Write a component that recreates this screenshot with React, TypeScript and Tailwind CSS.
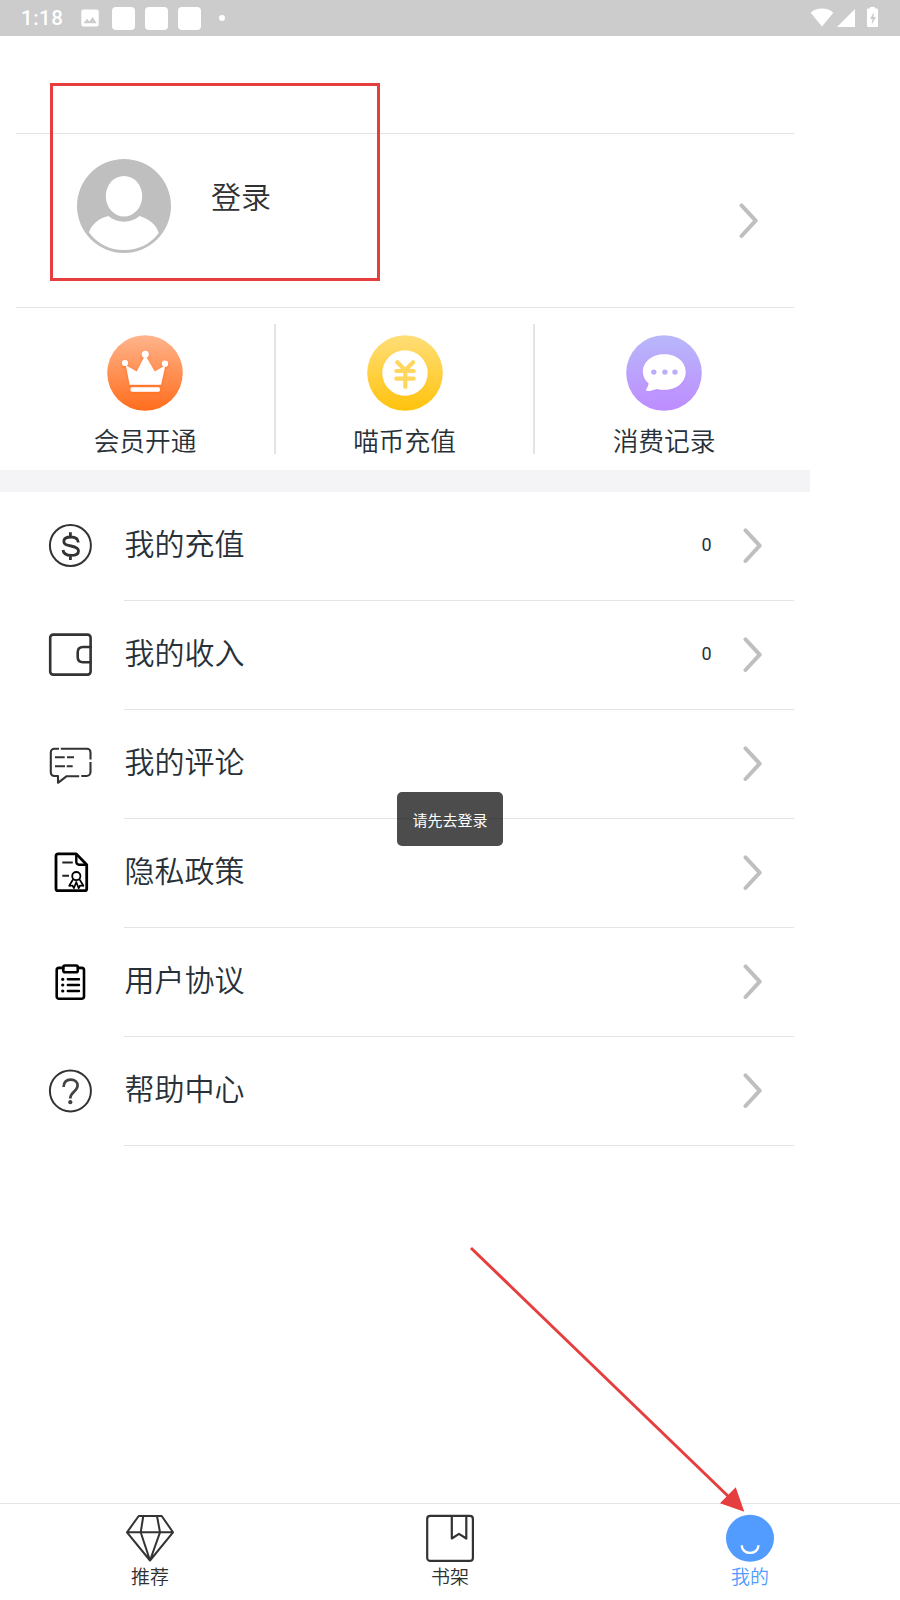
import type { ReactNode } from 'react';

const Chevron = () => (
  <svg className="block h-[36px] w-[20px]" viewBox="0 0 20 36" fill="none" stroke="#bfbfbf" strokeWidth="4" strokeLinecap="round" strokeLinejoin="round">
    <path d="M2.500 2.400 16.700 17.700 2.500 33" />
  </svg>
);

const Icon = ({ children, color = '#333', width = 2 }: { children: ReactNode; color?: string; width?: number }) => (
  <svg className="block size-[48px] shrink-0" viewBox="0 0 48 48" fill="none" stroke={color} strokeWidth={width} strokeLinecap="round" strokeLinejoin="round">
    {children}
  </svg>
);

const DollarIcon = () => (
  <Icon>
    <circle cx="24.4" cy="23.5" r="20.5" />
    <path strokeWidth="2.800" strokeLinecap="butt" d="M32.300 20.500C32 17 29.300 15 25 15c-4.500 0-7.200 1.600-7.200 4.400C17.800 22.500 20.500 23.200 25 24c4.600.9 7.500 2 7.500 4.900 0 3-3 4.500-7.500 4.500-4.800 0-7.600-1.700-8-5.400M24.400 10.200V15M24.400 33.400V38" />
  </Icon>
);
const WalletIcon = () => (
  <Icon width={2.600}>
    <rect x="4.200" y="3.600" width="40.400" height="40" rx="3" />
    <path d="M44.600 16H37c-3.500 0-5.300 2-5.300 5.200v4.900c0 3.200 1.800 5.200 5.300 5.200h7.600" />
  </Icon>
);
const CommentIcon = () => (
  <Icon width={2.100}>
    <path strokeLinecap="butt" d="M13 8.700H8.500a3.700 3.700 0 0 0-3.700 3.700v20.100A3.500 3.500 0 0 0 8.300 36H12v6.800l8.700-6.600h12.500M14.800 8.700H41a3.500 3.500 0 0 1 3.500 3.500v7.300M44.500 22V32a4 4 0 0 1-4 4h-5.200M9 17.300h9.700M21 17.300h7M9 26.300h10M20.700 26.300h6" />
  </Icon>
);
const PolicyIcon = () => (
  <Icon color="#000" width={2.800}>
    <path d="M12 4.900h18.300L40.700 15.700v24a2 2 0 0 1-2 2H12a2 2 0 0 1-2-2V6.900a2 2 0 0 1 2-2Z" />
    <path strokeWidth="2.400" d="M30.300 5.500V13a2.700 2.700 0 0 0 2.700 2.700h7" />
    <path stroke="#222" strokeWidth="2" strokeLinecap="butt" d="M16.300 13.500h10.500M16.300 26.700h6.700" />
    <circle strokeWidth="1.800" cx="30.300" cy="27.100" r="4.100" />
    <path strokeWidth="1.700" d="m26.700 31-3.500 5.800 3.300-.3 1.400 2.700 2.400-6.200 2.400 6.200 1.400-2.700 3.300.3L33.900 31" />
  </Icon>
);
const AgreementIcon = () => (
  <Icon color="#000" width={2.600}>
    <path d="M17.300 9.900H13a2.300 2.300 0 0 0-2.300 2.300v26.200a2.300 2.300 0 0 0 2.300 2.300h22.700a2.300 2.300 0 0 0 2.300-2.300V12.200a2.300 2.300 0 0 0-2.300-2.300H32" />
    <rect x="17.300" y="7.500" width="14.500" height="6.700" rx="1.800" />
    <path d="M21.800 21.300h11.200M21.800 27h11.200M21.800 33h11.200" strokeWidth="2.400" />
    <path d="M16.700 21.300h.1M16.700 27h.1M16.700 33h.1" strokeWidth="3.200" />
  </Icon>
);
const HelpIcon = () => (
  <Icon>
    <circle cx="24.400" cy="23.900" r="20.500" />
    <path stroke="#444" strokeWidth="2.700" strokeLinecap="butt" d="M17.600 20c0-4.700 2.800-7.400 7-7.400 4.300 0 7 2.300 7 6 0 5.700-7.300 6.400-7.300 13" />
    <circle cx="24.300" cy="35.200" r="2.100" fill="#444" stroke="none" />
  </Icon>
);

const Disc = ({ id, from, to, children }: { id: string; from: string; to: string; children: ReactNode }) => (
  <svg className="block size-[76px] shrink-0" viewBox="0 0 76 76">
    <defs>
      <linearGradient id={id} x1="0" y1="0" x2="0" y2="1">
        <stop offset="0" stopColor={from} />
        <stop offset="1" stopColor={to} />
      </linearGradient>
      <filter id={id + '-shadow'} x="-20%" y="-20%" width="140%" height="150%">
        <feDropShadow dx="0" dy="1.500" stdDeviation="1.500" floodColor={to} floodOpacity="0.800" />
      </filter>
    </defs>
    <circle cx="38" cy="38" r="37.800" fill={`url(#${id})`} />
    <g filter={`url(#${id}-shadow)`}>{children}</g>
  </svg>
);

const shortcuts = [
  {
    label: '会员开通',
    icon: (
      <Disc id="vip" from="#ffb48c" to="#ff6d1c">
        <g fill="#fff">
          <circle cx="18" cy="28" r="3.100" />
          <circle cx="38.300" cy="19.200" r="3.500" />
          <circle cx="58" cy="28.700" r="3.100" />
          <path d="m19 30.500 10.700 6 7.300-14h2.600l8.100 14 10.600-6L54 49.700H22.700Z" />
          <rect x="23.500" y="52.200" width="29.500" height="4.600" rx="1.800" />
        </g>
      </Disc>
    ),
  },
  {
    label: '喵币充值',
    icon: (
      <Disc id="coin" from="#ffde78" to="#ffc30d">
        <circle cx="38" cy="38" r="22.700" fill="#fff" />
        <path d="m30.300 27.300 7.900 7.900 7.900-7.900M29.300 36h17.400M29.300 43.700h17.400M38.300 36v16" fill="none" stroke="#ffd75f" strokeWidth="4.200" strokeLinecap="round" strokeLinejoin="round" />
      </Disc>
    ),
  },
  {
    label: '消费记录',
    icon: (
      <Disc id="history" from="#b8b8fa" to="#be8cff">
        <path fill="#fff" d="M38.300 19.200c12.300 0 21.400 7.600 21.400 17.700s-9 17.900-21.400 17.900c-2.700 0-4.800-.3-7-.9-3.200.4-6.500 2.300-10.500 2.200-1-.3-.7-1.400-.2-2.300 1-2 2-3.700 2-5.500-3.500-3-5.700-6.800-5.700-11.400 0-10.100 9-17.700 21.400-17.700Z" />
        <g fill="#bbadfb">
          <circle cx="27.800" cy="37.100" r="2.700" />
          <circle cx="38.900" cy="37.100" r="2.700" />
          <circle cx="49" cy="37.100" r="2.700" />
        </g>
      </Disc>
    ),
  },
];

const rows: { label: string; icon: ReactNode; value?: string }[] = [
  { label: '我的充值', icon: <DollarIcon />, value: '0' },
  { label: '我的收入', icon: <WalletIcon />, value: '0' },
  { label: '我的评论', icon: <CommentIcon /> },
  { label: '隐私政策', icon: <PolicyIcon /> },
  { label: '用户协议', icon: <AgreementIcon /> },
  { label: '帮助中心', icon: <HelpIcon /> },
];

const StatusBar = () => (
  <header className="flex h-[36px] shrink-0 items-center bg-[#ccc] pl-[21px] pr-[22px] text-white">
    <span className="w-[60px] pt-px text-[20.5px] font-medium leading-none tracking-[0.5px]">1:18</span>
    <svg className="size-[18px]" viewBox="0 0 18 18">
      <rect x=".3" y=".5" width="17.400" height="17" rx="2" fill="#fff" />
      <path d="m2.500 14.300 3.500-4.600 2.300 2.800 3.400-4.500 4 6.300Z" fill="#ccc" />
    </svg>
    <div className="ml-[13px] flex gap-[10px]">
      <span className="size-[23px] rounded-[4px] bg-white" />
      <span className="size-[23px] rounded-[4px] bg-white" />
      <span className="size-[23px] rounded-[4px] bg-white" />
    </div>
    <span className="ml-[18px] size-[6px] rounded-full bg-white" />
    <svg className="mb-[2px] ml-auto h-[20px] w-[68px]" viewBox="0 0 68 20" fill="#fff">
      <path d="M.7 5.700C6.500.2 17.500.2 23.300 5.700L12 19.500Z" />
      <path d="M45 2v18H27Z" />
      <path d="M60 0h5v1.500h2a1 1 0 0 1 1 1V19a1 1 0 0 1-1 1h-9a1 1 0 0 1-1-1V2.500a1 1 0 0 1 1-1h2Z" />
      <path d="m64 5-4 7h2.500l-1 6 4.500-8h-2.500Z" fill="#ccc" />
    </svg>
  </header>
);

const tabs = [
  {
    label: '推荐',
    active: false,
    icon: (
      <Icon width={2}>
        <path d="M12.700 2h23L47 18.300 24 46.500 1 18.300ZM1 18.300h46M17.300 2l-2.600 16.300L24 46.500l10-28.200L31 2" />
      </Icon>
    ),
  },
  {
    label: '书架',
    active: false,
    icon: (
      <Icon width={2.200}>
        <rect x="1.200" y="1.900" width="45.700" height="45" rx="3" />
        <path d="M25.800 2v22.500l7.200-4.600 7.300 4.600V2" />
      </Icon>
    ),
  },
  {
    label: '我的',
    active: true,
    icon: (
      <Icon color="#fff" width={2.300}>
        <ellipse cx="24" cy="24.300" rx="24" ry="23.500" fill="#529bff" stroke="none" />
        <path strokeLinecap="butt" d="M15.800 31.200c0 10.300 16.600 10.300 16.600 0" />
      </Icon>
    ),
  },
];

export default function App() {
  return (
    <div lang="zh-CN" className="relative flex h-[1600px] w-[900px] flex-col overflow-hidden bg-white font-['Roboto','Noto_Sans_CJK_SC',sans-serif] text-[#283038]">
      <StatusBar />

      <main className="flex w-[810px] flex-1 flex-col">
        <section className="mx-[16px] mt-[97px] flex h-[175px] border-y border-[#e4e4e4] pl-[61px] pt-[25px]">
          <svg className="block size-[94px]" viewBox="0 0 94 94">
            <circle cx="47" cy="47" r="47" fill="#bfbfbf" />
            <ellipse cx="47" cy="37.200" rx="18.200" ry="20.300" fill="#fff" />
            <path d="M31.500 57c8 7.500 23 7.500 31 0 9.500 2.700 17 9 19.200 17C73.500 85 61.500 91 47 91S20.500 85 12 73.500C14 66 22 59 31.500 57Z" fill="#fff" />
          </svg>
          <h1 className="ml-[40px] mt-[24px] text-[30px] font-[350] leading-none text-[#303133]">登录</h1>
          <div className="ml-auto mr-[35px] mt-[44px]">
            <Chevron />
          </div>
        </section>

        <section className="mx-[16px] grid h-[162px] grid-cols-[260px_259px_259px] py-[16px]">
          {shortcuts.map((s, i) => (
            <div key={s.label} className={`flex h-[130px] flex-col items-center pt-[11px] ${i < 2 ? 'border-r-2 border-[#e4e4e4]' : 'pr-px'}`}>
              {s.icon}
              <span className="mt-[19px] text-[25.7px] font-[350] leading-none">{s.label}</span>
            </div>
          ))}
        </section>
        <div className="h-[22px] bg-[#f4f4f6]" />

        <ul>
          {rows.map((r) => (
            <li key={r.label} className="flex h-[109px]">
              <div className="w-[124px] pl-[46px] pt-[30px]">{r.icon}</div>
              <div className="flex w-[670px] items-center border-b border-[#e4e4e4] pl-[0.5px] pr-[31px]">
                <span className="mb-[3px] text-[30px] font-[350] leading-none">{r.label}</span>
                <span className="mb-[3px] ml-auto mr-[31.5px] text-[18px] leading-none">{r.value}</span>
                <Chevron />
              </div>
            </li>
          ))}
        </ul>
      </main>

      <nav className="flex h-[97px] shrink-0 border-t border-[#e4e4e4]">
        {tabs.map((t) => (
          <div key={t.label} className={`flex flex-1 flex-col items-center pt-[10px] text-[19px] font-[350] leading-none ${t.active ? 'text-[#529bff]' : 'text-[#303030]'}`}>
            {t.icon}
            <span className="mt-[6px]">{t.label}</span>
          </div>
        ))}
      </nav>

      <div className="absolute left-[397px] top-[792px] flex h-[54px] w-[106px] items-center justify-center rounded-[5px] bg-black/70 pt-[4px] text-[15px] leading-none text-white">请先去登录</div>
      <div className="absolute left-[50px] top-[83px] h-[198px] w-[330px] border-[3px] border-[#e63e3e]" />
      <svg className="absolute left-[460px] top-[1240px] h-[280px] w-[300px]" viewBox="0 0 300 280">
        <path d="M11 8 270 258" stroke="#e63e3e" strokeWidth="3" />
        <path d="m284.300 271.700-24.300-8.500 15.700-16Z" fill="#e63e3e" />
      </svg>
    </div>
  );
}
